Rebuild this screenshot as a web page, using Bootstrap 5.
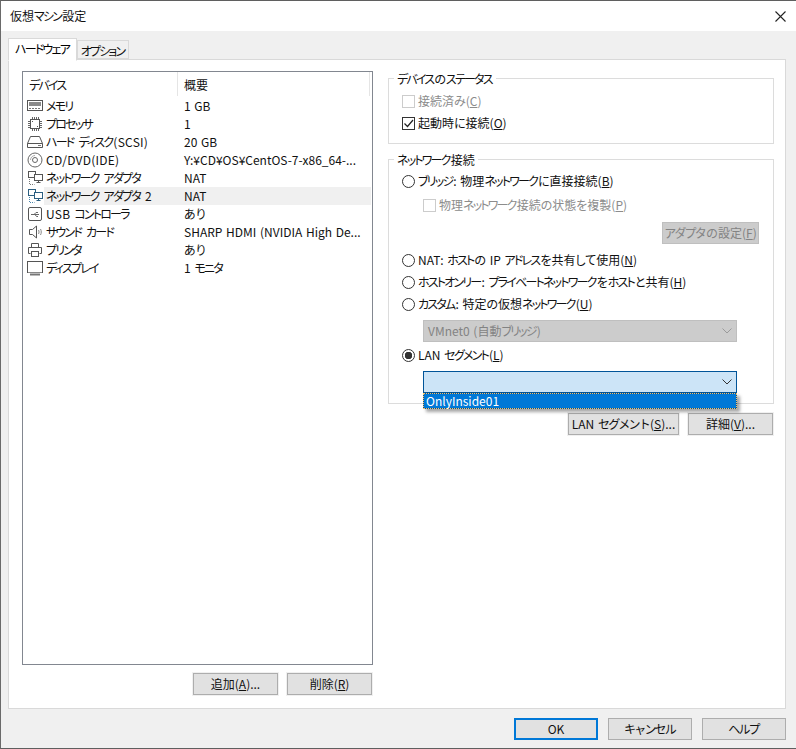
<!DOCTYPE html>
<html lang="ja">
<head>
<meta charset="utf-8">
<title>仮想マシン設定</title>
<link href="https://cdn.jsdelivr.net/npm/bootstrap@5.3.0/dist/css/bootstrap.min.css" rel="stylesheet">
<style>
html,body{height:100%;background:#f0f0f0}
body{margin:0;overflow:hidden;font-family:"Noto Sans CJK JP","Liberation Sans",sans-serif;font-size:12px;color:#111;font-feature-settings:"palt";line-height:18px;word-spacing:1px}
.vk{letter-spacing:-1.8px;margin-right:1px;word-spacing:4px}
.vm-win{width:796px;height:749px;background:#f0f0f0;border-top:1px solid #5f5f5f;border-left:1px solid #6a6a6a;border-bottom:1px solid #5f5f5f}
.vm-title{height:30px;background:#fff;padding-left:9px;padding-right:10px}
.vm-tabs{height:28px;padding-left:7px;border:0}
.vm-tabs .nav-link{font-size:12px;color:#111;border-radius:0;padding:0;text-align:center;height:19px;margin:9px 0 0;background:#f0f0f0;border:1px solid #d9d9d9;line-height:19px;width:52px;white-space:nowrap}
.vm-tabs .nav-link.active{height:23px;margin-top:7px;width:69px;background:#fff;border-color:#d9d9d9;border-bottom-color:#fff;line-height:20px;position:relative;z-index:1}
.vm-panel{width:778px;height:650px;margin-left:7px;background:#fff;border:1px solid #d9d9d9;padding:11px 0 0 13px}
.vm-left{width:351px}
.vm-list{height:594px;border:1px solid #828790;background:#fff}
.vm-head{height:25px}
.vm-h1{width:155px;padding-left:6px;border-right:1px solid #e5e5e5;line-height:25px;height:24px}
.vm-h2{flex:1;padding-left:6px;line-height:25px;height:24px;border-right:1px solid #e5e5e5;margin-right:2px}
.vm-row{height:18px;white-space:nowrap}
.vm-ic{width:21px;padding-left:4px;flex:none;display:flex;align-items:center}
.vm-rowbody{flex:1;display:flex;padding-left:2px;margin-right:1px}
.vm-sel{background:#f0f0f0}
.vm-n{width:138px;letter-spacing:.25px}
.vm-right{width:386px;margin-top:7px;margin-left:15px}
.vm-grp{border:1px solid #dcdcdc;background:#fff}
.vm-grp-t{display:table;margin:-9px 0 0 5px;padding:0 3px;background:#fff;line-height:18px}
.vm-g1{height:66px}
.vm-g2{height:245px;margin-top:15px;position:relative}
.vm-sp2{height:2px}
.vm-sp1{height:1px}
.vm-line{height:22px;padding-left:13px;white-space:nowrap}
.vm-line.vm-ind{padding-left:34px;margin-top:2px}
.vm-after{margin-top:5px}
.vm-dis{color:#8c8c8c}
.vm-line .form-check-input{width:13px;height:13px;margin:0 3px 0 0;flex:none;border:1px solid #333;background-color:#fff;border-radius:0;box-shadow:none;opacity:1;float:none}
.vm-line .form-check-input[type=radio]{border-radius:50%}
.vm-line .form-check-input:checked[type=radio]{background-image:none;background:radial-gradient(circle,#333 0 3.5px,#fff 4px);border-color:#333}
.vm-line .form-check-input:checked[type=checkbox]{background-color:#fff;border-color:#333;background-image:linear-gradient(#fff,#fff)}
.vm-line .form-check-input:disabled{border-color:#ccc;background:#fff}
.vm-chkwrap{position:relative;display:inline-flex;flex:none;margin-right:3px}
.vm-line .vm-chkwrap .form-check-input{margin:0}
.vm-chkmark{position:absolute;left:1px;top:1px;width:11px;height:11px;pointer-events:none}
.vm-btn.btn{font-size:12px;font-family:inherit;line-height:18px;padding:0;border-radius:0;background:#e1e1e1;border:1px solid #adadad;color:#111;height:22px;white-space:nowrap;outline:1px solid #f0f0f0;word-spacing:1px}
.vm-btn.btn:disabled{background:#ccc;border-color:#bfbfbf;color:#838383;opacity:1;outline:0}
.vm-btn.vm-def{border:2px solid #0078d7}
.vm-w85{width:85px}
.vm-adapter{width:97px;margin:6px 0 0 273px;display:block}
.vm-combo{width:314px;height:22px;margin-left:34px;padding-left:4px;line-height:20px;white-space:nowrap}
.vm-combo-dis{background:#ccc;border:1px solid #bfbfbf;color:#838383;margin-top:5px;margin-bottom:2px}
.vm-combo-act{background:#cce4f7;border:1px solid #005499;margin-top:5px}
.vm-drop{position:absolute;left:34px;top:233px;width:314px;height:16px;background:#0078d7;border:1px solid #005499;color:#fff;padding-left:2px;line-height:13px;box-shadow:3px 3px 3px rgba(0,0,0,.35);outline:1px dotted #f5c26b;outline-offset:-1px;z-index:2;font-size:12px}
.vm-footer{padding:9px 0 0 513px;gap:10px}
.vm-footer .vm-btn{width:84px;height:22px}
.vm-lbtns{margin-top:8px;gap:9px;padding-left:171px}
.vm-rbtns{margin-top:9px;padding-left:180px;gap:9px}
.vm-rbtns .vm-w111{width:111px}
u{text-underline-offset:1px}
</style>
</head>
<body>
<div class="vm-win d-flex flex-column">
  <div class="vm-title d-flex align-items-center justify-content-between">
    <span>仮想<span class="vk">マシン</span>設定</span>
    <svg width="11" height="11" viewBox="0 0 11 11"><path d="M.5.5l10 10M10.500.5l-10 10" stroke="#222" stroke-width="1.100" fill="none"/></svg>
  </div>
  <ul class="nav nav-tabs vm-tabs">
    <li class="nav-item"><a class="nav-link active" href="#"><span class="vk">ハードウェア</span></a></li>
    <li class="nav-item"><a class="nav-link" href="#"><span class="vk">オプション</span></a></li>
  </ul>
  <div class="vm-panel d-flex">
    <div class="vm-left">
      <div class="vm-list">
        <div class="vm-head d-flex"><div class="vm-h1"><span class="vk">デバイス</span></div><div class="vm-h2">概要</div></div>

        <div class="vm-row d-flex"><div class="vm-ic"><svg width="16" height="16" viewBox="0 0 16 16"><rect x=".5" y="2.500" width="15" height="10" fill="#fff" stroke="#555"/><rect x="2" y="4" width="12" height="4" fill="#8a8a8a"/><path d="M2 10.500h12" stroke="#777" stroke-dasharray="2 1"/></svg></div><div class="vm-rowbody"><div class="vm-n"><span class="vk">メモリ</span></div><div>1 GB</div></div></div>

        <div class="vm-row d-flex"><div class="vm-ic"><svg width="16" height="16" viewBox="0 0 16 16"><rect x="3.500" y="3.500" width="9" height="9" fill="#fff" stroke="#555"/><path d="M5.500 1v2M7.500 1v2M9.500 1v2M11.500 1v2M5.500 13v2M7.500 13v2M9.500 13v2M11.500 13v2M1 5.500h2M1 7.500h2M1 9.500h2M1 11.500h2M13 5.500h2M13 7.500h2M13 9.500h2M13 11.500h2" stroke="#666"/><path d="M5 5h1v1H5zM10 10h1v1h-1z" fill="#555"/></svg></div><div class="vm-rowbody"><div class="vm-n"><span class="vk">プロセッサ</span></div><div>1</div></div></div>

        <div class="vm-row d-flex"><div class="vm-ic"><svg width="16" height="16" viewBox="0 0 16 16"><path d="M3.500 2.500h9l3 7v4H.5v-4zM.5 9.500h15" fill="#fff" stroke="#555"/><path d="M11 11.500h3" stroke="#777"/></svg></div><div class="vm-rowbody"><div class="vm-n"><span class="vk">ハード ディスク</span>(SCSI)</div><div>20 GB</div></div></div>

        <div class="vm-row d-flex"><div class="vm-ic"><svg width="16" height="16" viewBox="0 0 16 16"><circle cx="8" cy="8" r="7" fill="#fff" stroke="#666"/><circle cx="8" cy="8" r="2.500" fill="#fff" stroke="#666"/><path d="M3.500 8A4.500 4.500 0 0 1 8 3.500" fill="none" stroke="#aaa"/></svg></div><div class="vm-rowbody"><div class="vm-n">CD/DVD(IDE)</div><div>Y:¥CD¥OS¥CentOS-7-x86_64-...</div></div></div>

        <div class="vm-row d-flex"><div class="vm-ic"><svg width="16" height="16" viewBox="0 0 16 16"><rect x="1.500" y="1.500" width="7" height="6" fill="#fff" stroke="#555"/><rect x="7.500" y="4.500" width="8" height="6" fill="#fff" stroke="#555"/><path d="M11.500 10.500v2M9.500 12.500h4" stroke="#555"/><path d="M2.500 9v5.500h5" fill="none" stroke="#777" stroke-dasharray="1 1"/></svg></div><div class="vm-rowbody"><div class="vm-n"><span class="vk">ネットワーク アダプタ</span></div><div>NAT</div></div></div>

        <div class="vm-row d-flex"><div class="vm-ic"><svg width="16" height="16" viewBox="0 0 16 16"><rect x="1.500" y="1.500" width="7" height="6" fill="#fff" stroke="#2b5f82"/><rect x="7.500" y="4.500" width="8" height="6" fill="#fff" stroke="#2b5f82"/><path d="M11.500 10.500v2M9.500 12.500h4" stroke="#2b5f82"/><path d="M2.500 9v5.500h5" fill="none" stroke="#4a86ad" stroke-dasharray="1 1"/></svg></div><div class="vm-rowbody vm-sel"><div class="vm-n"><span class="vk">ネットワーク アダプタ</span> 2</div><div>NAT</div></div></div>

        <div class="vm-row d-flex"><div class="vm-ic"><svg width="16" height="16" viewBox="0 0 16 16"><rect x="1.500" y="1.500" width="13" height="13" rx="1.500" fill="#fff" stroke="#555"/><path d="M4 8.500h8M7 8.500l2-2h2M8 8.500l1.500 2H11" fill="none" stroke="#666"/></svg></div><div class="vm-rowbody"><div class="vm-n">USB <span class="vk">コントローラ</span></div><div>あり</div></div></div>

        <div class="vm-row d-flex"><div class="vm-ic"><svg width="16" height="16" viewBox="0 0 16 16"><path d="M2.500 5.500h3l4-3.500v12l-4-3.500h-3z" fill="#fff" stroke="#555"/><path d="M11.500 6c.7 1.300.7 2.700 0 4M13.500 5c1 2 1 4 0 6" fill="none" stroke="#888"/></svg></div><div class="vm-rowbody"><div class="vm-n"><span class="vk">サウンド カード</span></div><div>SHARP HDMI (NVIDIA High De...</div></div></div>

        <div class="vm-row d-flex"><div class="vm-ic"><svg width="16" height="16" viewBox="0 0 16 16"><path d="M4.500 5.500v-4h7v4M3.500 11.500h-2v-6h13v6h-2" fill="#fff" stroke="#555"/><rect x="4.500" y="9.500" width="7" height="5" fill="#fff" stroke="#555"/></svg></div><div class="vm-rowbody"><div class="vm-n"><span class="vk">プリンタ</span></div><div>あり</div></div></div>

        <div class="vm-row d-flex"><div class="vm-ic"><svg width="16" height="16" viewBox="0 0 16 16"><rect x=".5" y="1.500" width="15" height="11" fill="#fff" stroke="#555"/><path d="M1 12.500h14" stroke="#888"/><path d="M3 14.500h10" stroke="#777" stroke-width="2"/></svg></div><div class="vm-rowbody"><div class="vm-n"><span class="vk">ディスプレイ</span></div><div>1 <span class="vk">モニタ</span></div></div></div>
      </div>
      <div class="vm-lbtns d-flex"><button class="btn vm-btn vm-w85" type="button">追加(<u>A</u>)...</button><button class="btn vm-btn vm-w85" type="button">削除(<u>R</u>)</button></div>
    </div>

    <div class="vm-right">
      <div class="vm-grp vm-g1">
        <div class="vm-grp-t"><span class="vk">デバイス</span>の<span class="vk">ステータス</span></div>
        <div class="vm-sp2"></div>
        <div class="vm-line d-flex align-items-center vm-dis"><input class="form-check-input" type="checkbox" disabled><span>接続済み(<u>C</u>)</span></div>
        <div class="vm-line d-flex align-items-center"><span class="vm-chkwrap"><input class="form-check-input" type="checkbox" checked><svg class="vm-chkmark" viewBox="0 0 11 11"><path d="M1.500 5.500l3 3 5.500-6.500" fill="none" stroke="#222" stroke-width="1.200"/></svg></span><span>起動時に接続(<u>O</u>)</span></div>
      </div>
      <div class="vm-grp vm-g2">
        <div class="vm-grp-t"><span class="vk">ネットワーク</span>接続</div>
        <div class="vm-sp1"></div>
        <div class="vm-line d-flex align-items-center"><input class="form-check-input" type="radio" name="n"><span><span class="vk">ブリッジ</span>: 物理<span class="vk">ネットワーク</span>に直接接続(<u>B</u>)</span></div>
        <div class="vm-line vm-ind d-flex align-items-center vm-dis"><input class="form-check-input" type="checkbox" disabled><span>物理<span class="vk">ネットワーク</span>接続の状態を複製(<u>P</u>)</span></div>
        <button class="btn vm-btn vm-adapter" type="button" disabled><span class="vk">アダプタ</span>の設定(<u>F</u>)</button>
        <div class="vm-line vm-after d-flex align-items-center"><input class="form-check-input" type="radio" name="n"><span>NAT: <span class="vk">ホスト</span>の IP <span class="vk">アドレス</span>を共有して使用(<u>N</u>)</span></div>
        <div class="vm-line d-flex align-items-center"><input class="form-check-input" type="radio" name="n"><span><span class="vk">ホストオンリー</span>: <span class="vk">プライベートネットワーク</span>を<span class="vk">ホスト</span>と共有(<u>H</u>)</span></div>
        <div class="vm-line d-flex align-items-center"><input class="form-check-input" type="radio" name="n"><span><span class="vk">カスタム</span>: 特定の仮想<span class="vk">ネットワーク</span>(<u>U</u>)</span></div>
        <div class="vm-combo vm-combo-dis d-flex align-items-center justify-content-between"><span>VMnet0 (自動<span class="vk">ブリッジ</span>)</span><svg class="me-1" width="10" height="6" viewBox="0 0 10 6"><path d="M.5.500l4.500 4.500 4.500-4.500" fill="none" stroke="#9a9a9a"/></svg></div>
        <div class="vm-line d-flex align-items-center"><input class="form-check-input" type="radio" name="n" checked><span>LAN <span class="vk">セグメント</span>(<u>L</u>)</span></div>
        <div class="vm-combo vm-combo-act d-flex align-items-center justify-content-end"><svg class="me-1" width="10" height="6" viewBox="0 0 10 6"><path d="M.5.500l4.500 4.500 4.500-4.500" fill="none" stroke="#333"/></svg></div>
        <div class="vm-drop">OnlyInside01</div>
      </div>
      <div class="vm-rbtns d-flex"><button class="btn vm-btn vm-w111" type="button">LAN <span class="vk">セグメント</span>(<u>S</u>)...</button><button class="btn vm-btn vm-w85" type="button">詳細(<u>V</u>)...</button></div>
    </div>
  </div>
  <div class="vm-footer d-flex">
    <button class="btn vm-btn vm-def" type="button">OK</button>
    <button class="btn vm-btn" type="button"><span class="vk">キャンセル</span></button>
    <button class="btn vm-btn" type="button"><span class="vk">ヘルプ</span></button>
  </div>
</div>
<script src="https://cdn.jsdelivr.net/npm/bootstrap@5.3.0/dist/js/bootstrap.bundle.min.js"></script>
</body>
</html>
